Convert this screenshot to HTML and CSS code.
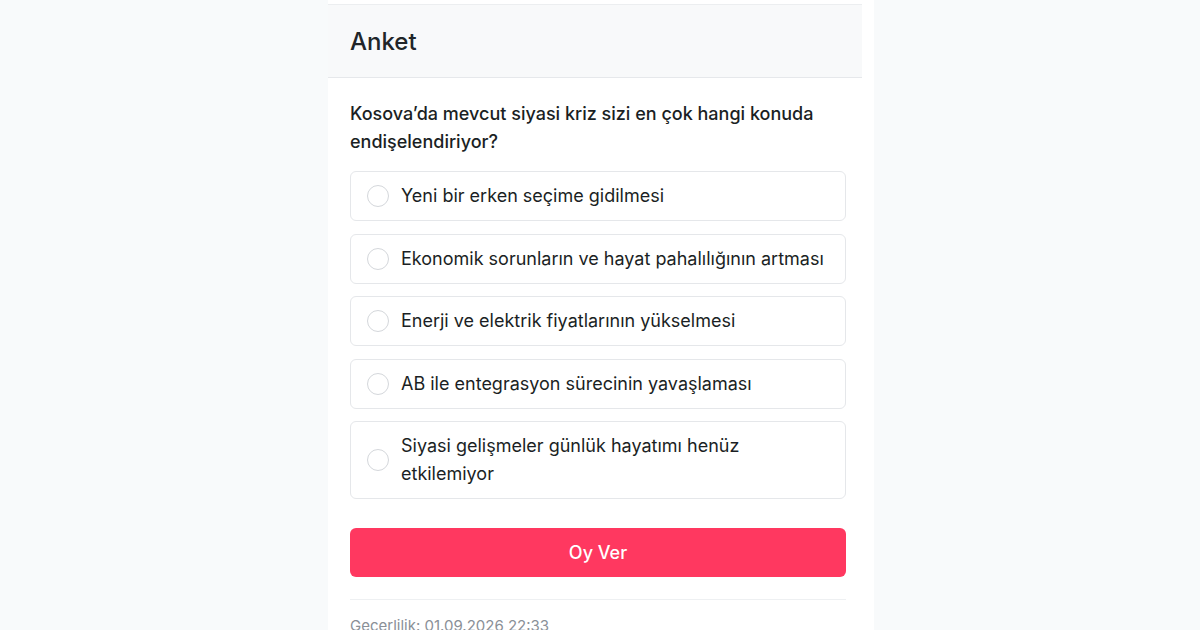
FILE: index.html
```html
<!DOCTYPE html>
<html lang="tr">
<head>
    <meta charset="UTF-8">
    <meta name="viewport" content="width=device-width, initial-scale=1.0">
    <title>Anket</title>
    <link rel="stylesheet" href="styles.css">
</head>
<body>
    <div class="page">
        <div class="poll">
            <div class="poll-header">
                <h2>Anket</h2>
            </div>

            <div class="poll-body">
                <p class="question">Kosova’da mevcut siyasi kriz sizi en çok hangi konuda endişelendiriyor?</p>

                <div class="options">
                    <label class="option"><span class="radio"></span><span>Yeni bir erken seçime gidilmesi</span></label>
                    <label class="option"><span class="radio"></span><span>Ekonomik sorunların ve hayat pahalılığının artması</span></label>
                    <label class="option"><span class="radio"></span><span>Enerji ve elektrik fiyatlarının yükselmesi</span></label>
                    <label class="option"><span class="radio"></span><span>AB ile entegrasyon sürecinin yavaşlaması</span></label>
                    <label class="option"><span class="radio"></span><span>Siyasi gelişmeler günlük hayatımı henüz etkilemiyor</span></label>
                </div>

                <button class="vote-button">Oy Ver</button>

                <div class="poll-footer">Geçerlilik: 01.09.2026 22:33</div>
            </div>
        </div>
    </div>
</body>
</html>
```

FILE: styles.css
```css
body {
    margin: 0;
    background-color: #f8fafb;
    font-family: Inter, "Open Sans", sans-serif;
    color: #1f2328;
}

.page {
    width: 546px;
    margin-left: 328px;
    min-height: 630px;
    background: #fff;
    padding-top: 4px;
}

.poll {
    width: 534px;
}

.poll-header {
    height: 74px;
    background-color: #f8f9fa;
    border-top: 1px solid #eceef0;
    border-bottom: 1px solid #e6e8eb;
    padding: 0 22px;
    display: flex;
    align-items: center;
    box-sizing: border-box;
}

.poll-header h2 {
    margin: 0;
    font-size: 24px;
    font-weight: 500;
    color: #212529;
}

.poll-body {
    padding: 22px 16px 0 22px;
}

.question {
    margin: 0 0 15px;
    font-size: 18px;
    font-weight: 500;
    line-height: 28px;
    color: #1b1f24;
}

.options {
    display: flex;
    flex-direction: column;
    gap: 12.5px;
}

.option {
    display: flex;
    align-items: center;
    gap: 12px;
    min-height: 50px;
    padding: 10px 16px;
    box-sizing: border-box;
    border: 1px solid #e5e7ea;
    border-radius: 6px;
    font-size: 18px;
    line-height: 28px;
    color: #1b1f24;
}

.radio {
    flex-shrink: 0;
    width: 20px;
    height: 20px;
    border: 1px solid #d4d7db;
    border-radius: 50%;
}

.vote-button {
    display: block;
    width: 100%;
    height: 49px;
    margin-top: 29px;
    border: none;
    border-radius: 6px;
    background-color: #ff3860;
    color: #fff;
    font-family: inherit;
    font-size: 18px;
    font-weight: 500;
}

.poll-footer {
    margin-top: 22px;
    padding-top: 16px;
    border-top: 1px solid #eef0f2;
    font-size: 15px;
    color: #8a9097;
}
```
